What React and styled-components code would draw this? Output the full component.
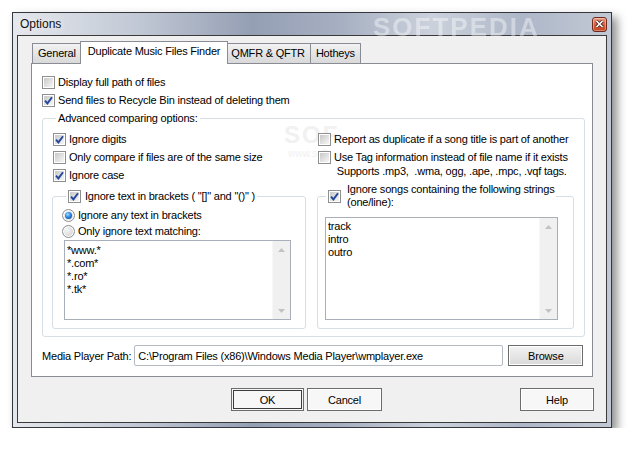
import React from "react";
import styled, { createGlobalStyle } from "styled-components";

const GlobalStyle = createGlobalStyle`
  body {
    margin: 0;
    background: #fff;
    font-family: "Liberation Sans", Arial, sans-serif;
    font-size: 11px;
    letter-spacing: -0.2px;
    color: #000;
  }
`;

const Page = styled.div`
  padding: 12px 0 0 12px;
`;

const Window = styled.div`
  position: relative;
  width: 600px;
  height: 416px;
  box-sizing: border-box;
  border: 1px solid #34373c;
  background: linear-gradient(
    to right,
    #e4e7ec 0%,
    #c3cad6 20%,
    #959fb4 40%,
    #a7b0c2 55%,
    #ccd2dc 70%,
    #aeb7c8 85%,
    #c2c9d5 100%
  );
  box-shadow: 5px 5px 9px rgba(0, 0, 0, 0.45);
  display: flex;
  flex-direction: column;
`;

const TitleBar = styled.div`
  position: relative;
  height: 22px;
  display: flex;
  align-items: center;
  padding: 0 4px 0 7px;
`;

const Title = styled.div`
  flex: 1;
  font-size: 12px;
  letter-spacing: 0;
  color: #111;
  text-shadow: 0 0 6px rgba(255, 255, 255, 0.9);
`;

const TitleMark = styled.div`
  position: absolute;
  left: 360px;
  top: -1px;
  font-size: 26px;
  font-weight: bold;
  letter-spacing: 2px;
  color: rgba(255, 255, 255, 0.4);
  filter: blur(0.7px);
`;

const CloseButton = styled.div`
  width: 15px;
  height: 15px;
  box-sizing: border-box;
  border: 1px solid #6e2b1d;
  border-radius: 3px;
  background: linear-gradient(#eb9d84, #d8603f 50%, #c4401e);
  box-shadow: inset 0 0 0 1px rgba(255, 255, 255, 0.35);
  display: flex;
  align-items: center;
  justify-content: center;
`;

const Client = styled.div`
  flex: 1;
  margin: 0 4px 4px;
  border: 1px solid #3a3a3a;
  background: #f0f0f0;
  padding: 5px 0 0 13px;
`;

const TabStrip = styled.div`
  position: relative;
  z-index: 1;
  height: 22px;
  display: flex;
  align-items: flex-end;
  padding-left: 2px;
`;

const Tab = styled.div`
  position: relative;
  box-sizing: border-box;
  height: ${(p) => (p.$active ? "23px" : "20px")};
  margin: ${(p) => (p.$active ? "0 -2px -1px" : "0 0 0 -1px")};
  z-index: ${(p) => (p.$active ? 2 : 1)};
  padding: ${(p) => (p.$active ? "2px 7px 0" : "2px 5px 0")};
  border: 1px solid #898c95;
  border-bottom: none;
  background: ${(p) =>
    p.$active ? "#fff" : "linear-gradient(#f2f2f2, #e5e5e5 50%, #d9d9d9)"};
  line-height: 15px;
  white-space: nowrap;
`;

const Panel = styled.div`
  position: relative;
  width: 562px;
  height: 314px;
  box-sizing: border-box;
  border: 1px solid #898c95;
  background: #fff;
  padding: 9px 7px 0 10px;
`;

const PanelMark = styled.div`
  position: absolute;
  left: 252px;
  top: 58px;
  color: #f1f1f1;
  font-size: 24px;
  font-weight: bold;
  letter-spacing: 2px;
  line-height: 26px;
  pointer-events: none;
  small {
    display: block;
    font-size: 10px;
    font-weight: normal;
    letter-spacing: 0;
    line-height: 12px;
    padding-left: 4px;
  }
`;

const CheckRow = styled.label`
  position: relative;
  display: flex;
  align-items: ${(p) => (p.$top ? "flex-start" : "center")};
  gap: 3px;
  min-height: 18px;
  padding-left: ${(p) => p.$indent || 0}px;
  white-space: nowrap;
`;

const RowText = styled.span`
  line-height: 14px;
  padding-top: ${(p) => (p.$top ? "2px" : "0")};
  white-space: pre;
`;

const Box = styled.span`
  flex: none;
  width: 13px;
  height: 13px;
  box-sizing: border-box;
  margin-top: ${(p) => (p.$top ? "3px" : "0")};
  border: 1px solid #8e8f8f;
  padding: 1px;
  background: linear-gradient(135deg, #c8c8c8, #f6f6f6) content-box, #fff;
  display: flex;
  align-items: center;
  justify-content: center;
`;

const RadioDot = styled.span`
  flex: none;
  width: 13px;
  height: 13px;
  box-sizing: border-box;
  border-radius: 50%;
  border: 1px solid #8c8f93;
  box-shadow: inset 0 0 0 1px #fff;
  background: radial-gradient(circle at 35% 35%, #f6f6f6, #c9c9c9);
  display: flex;
  align-items: center;
  justify-content: center;
  &::after {
    content: "";
    display: ${(p) => (p.$checked ? "block" : "none")};
    width: 7px;
    height: 7px;
    border-radius: 50%;
    background: radial-gradient(
      circle at 40% 35%,
      #a8ddff,
      #2a86de 45%,
      #0b3c8a
    );
  }
`;

const RadioRow = styled.label`
  display: flex;
  align-items: center;
  gap: 3px;
  height: 16px;
  white-space: nowrap;
`;

const GroupBox = styled.fieldset`
  position: relative;
  margin: ${(p) => p.$margin || "0"};
  padding: ${(p) => p.$pad};
  border: 1px solid #d5dfe5;
  border-radius: 3px;
  min-inline-size: 0;
  box-sizing: border-box;
  display: flex;
  flex-direction: column;
  height: ${(p) => (p.$height ? `${p.$height}px` : "auto")};
  flex: ${(p) => (p.$grow ? 1 : "none")};
`;

const Legend = styled.legend`
  margin-left: ${(p) => p.$indent}px;
  padding: 0 2px;
  line-height: 13px;
  display: flex;
  align-items: center;
  gap: ${(p) => p.$gap || 3}px;
  white-space: nowrap;
`;

const Columns = styled.div`
  flex: 1;
  display: flex;
  gap: 11px;
`;

const Column = styled.div`
  display: flex;
  flex-direction: column;
  width: ${(p) => (p.$width ? `${p.$width}px` : "auto")};
  flex: ${(p) => (p.$width ? "none" : 1)};
`;

const SubGroupWrap = styled.div`
  flex: 1;
  display: flex;
  flex-direction: column;
  margin-top: ${(p) => p.$offset}px;
`;

const ListBox = styled.div`
  flex: 1;
  display: flex;
  margin: ${(p) => p.$margin};
  border: 1px solid #a9afb8;
  background: #fff;
`;

const ListItems = styled.div`
  flex: 1;
  padding: ${(p) => p.$padTop}px 2px 0;
  line-height: 13px;
`;

const ScrollBar = styled.div`
  width: 17px;
  background: #f0f0f0;
  border-left: 1px solid #f7f7f7;
  display: flex;
  flex-direction: column;
  justify-content: space-between;
`;

const ScrollArrow = styled.div`
  height: 17px;
  display: flex;
  align-items: center;
  justify-content: center;
`;

const PathRow = styled.div`
  display: flex;
  align-items: center;
  gap: 3px;
  margin-top: 8px;
  height: 21px;
`;

const PathInput = styled.div`
  width: 369px;
  height: 21px;
  box-sizing: border-box;
  border: 1px solid #b5bac2;
  border-radius: 2px;
  background: #fff;
  padding-left: 3px;
  display: flex;
  align-items: center;
  margin-right: 2px;
  white-space: nowrap;
`;

const Button = styled.button`
  width: ${(p) => p.$width}px;
  height: ${(p) => p.$height || 23}px;
  margin-left: ${(p) => (p.$push ? "auto" : "0")};
  box-sizing: border-box;
  border: 1px solid #6c6c6c;
  border-radius: 0;
  background: ${(p) =>
    p.$grey ? "linear-gradient(#f3f3f3, #e6e6e6 50%, #dadada)" : "#f7f7f7"};
  box-shadow: ${(p) =>
    p.$default
      ? "inset 0 0 0 1px #f7f7f7, inset 0 0 0 2px #3c3c3c"
      : "inset 0 0 0 1px #fff"};
  font-family: inherit;
  font-size: 11px;
  letter-spacing: -0.2px;
  color: #000;
  padding: 0;
`;

const ButtonRow = styled.div`
  width: 563px;
  display: flex;
  gap: 3px;
  padding-left: 200px;
  box-sizing: border-box;
  margin-top: 11px;
`;

const Check = ({ checked, top }) => (
  <Box $top={top}>
    {checked && (
      <svg width="9" height="9" viewBox="0 0 9 9">
        <path
          d="M1 4.6 L3.4 7.4 L8 1.2"
          fill="none"
          stroke="#25479b"
          strokeWidth="1.9"
        />
      </svg>
    )}
  </Box>
);

const Arrow = ({ down }) => (
  <ScrollArrow>
    <svg width="7" height="4" viewBox="0 0 7 4">
      <path
        d={down ? "M0 0 L7 0 L3.5 4 Z" : "M0 4 L7 4 L3.5 0 Z"}
        fill="#c2c2c2"
      />
    </svg>
  </ScrollArrow>
);

const List = ({ items, margin, padTop }) => (
  <ListBox $margin={margin}>
    <ListItems $padTop={padTop}>
      {items.map((it) => (
        <div key={it}>{it}</div>
      ))}
    </ListItems>
    <ScrollBar>
      <Arrow />
      <Arrow down />
    </ScrollBar>
  </ListBox>
);

const tabs = ["General", "Duplicate Music Files Finder", "QMFR & QFTR", "Hotheys"];

export default function App() {
  return (
    <Page>
      <GlobalStyle />
      <Window>
        <TitleBar>
          <Title>Options</Title>
          <TitleMark>SOFTPEDIA</TitleMark>
          <CloseButton>
            <svg width="9" height="8" viewBox="0 0 9 8">
              <path
                d="M1.5 1 L7.5 7 M7.5 1 L1.5 7"
                stroke="#4a2a22"
                strokeWidth="3.2"
              />
              <path
                d="M1.5 1 L7.5 7 M7.5 1 L1.5 7"
                stroke="#fff"
                strokeWidth="1.6"
              />
            </svg>
          </CloseButton>
        </TitleBar>
        <Client>
          <TabStrip>
            {tabs.map((t) => (
              <Tab key={t} $active={t === "Duplicate Music Files Finder"}>
                {t}
              </Tab>
            ))}
          </TabStrip>
          <Panel>
            <PanelMark>
              SOF
              <small>www.soft</small>
            </PanelMark>
            <CheckRow>
              <Check />
              <RowText>Display full path of files</RowText>
            </CheckRow>
            <CheckRow>
              <Check checked />
              <RowText>Send files to Recycle Bin instead of deleting them</RowText>
            </CheckRow>

            <GroupBox $margin="3px 0 0" $pad="5px 10px 7px 9px" $height={225}>
              <Legend $indent={4}>Advanced comparing options:</Legend>
              <Columns>
                <Column $width={254}>
                  <CheckRow $indent={1}>
                    <Check checked />
                    <RowText>Ignore digits</RowText>
                  </CheckRow>
                  <CheckRow $indent={1}>
                    <Check />
                    <RowText>Only compare if files are of the same size</RowText>
                  </CheckRow>
                  <CheckRow $indent={1}>
                    <Check checked />
                    <RowText>Ignore case</RowText>
                  </CheckRow>
                  <SubGroupWrap $offset={6}>
                    <GroupBox $grow $pad="4px 14px 8px 9px">
                      <Legend $indent={4} $gap={4}>
                        <Check checked />
                        <span>Ignore text in brackets ( "[]" and "()" )</span>
                      </Legend>
                      <RadioRow>
                        <RadioDot $checked />
                        <span>Ignore any text in brackets</span>
                      </RadioRow>
                      <RadioRow>
                        <RadioDot />
                        <span>Only ignore text matching:</span>
                      </RadioRow>
                      <List
                        items={["*www.*", "*.com*", "*.ro*", "*.tk*"]}
                        margin="1px 0 0 2px"
                        padTop={3}
                      />
                    </GroupBox>
                  </SubGroupWrap>
                </Column>
                <Column>
                  <CheckRow $indent={1}>
                    <Check />
                    <RowText>Report as duplicate if a song title is part of another</RowText>
                  </CheckRow>
                  <CheckRow $indent={1} $top>
                    <Check top />
                    <RowText $top>
                      {"Use Tag information instead of file name if it exists\n Supports .mp3,  .wma, ogg, .ape, .mpc, .vqf tags."}
                    </RowText>
                  </CheckRow>
                  <SubGroupWrap $offset={5}>
                    <GroupBox $grow $pad="8px 15px 8px 7px">
                      <Legend $indent={1} $gap={6}>
                        <Check checked />
                        <span>
                          Ignore songs containing the following strings
                          <br />
                          (one/line):
                        </span>
                      </Legend>
                      <List
                        items={["track", "intro", "outro"]}
                        margin="0"
                        padTop={2}
                      />
                    </GroupBox>
                  </SubGroupWrap>
                </Column>
              </Columns>
            </GroupBox>

            <PathRow>
              <span>Media Player Path:</span>
              <PathInput>C:\Program Files (x86)\Windows Media Player\wmplayer.exe</PathInput>
              <Button $width={75} $height={21} $grey>
                Browse
              </Button>
            </PathRow>
          </Panel>
          <ButtonRow>
            <Button $width={73} $default>
              OK
            </Button>
            <Button $width={75}>Cancel</Button>
            <Button $width={74} $push>
              Help
            </Button>
          </ButtonRow>
        </Client>
      </Window>
    </Page>
  );
}
